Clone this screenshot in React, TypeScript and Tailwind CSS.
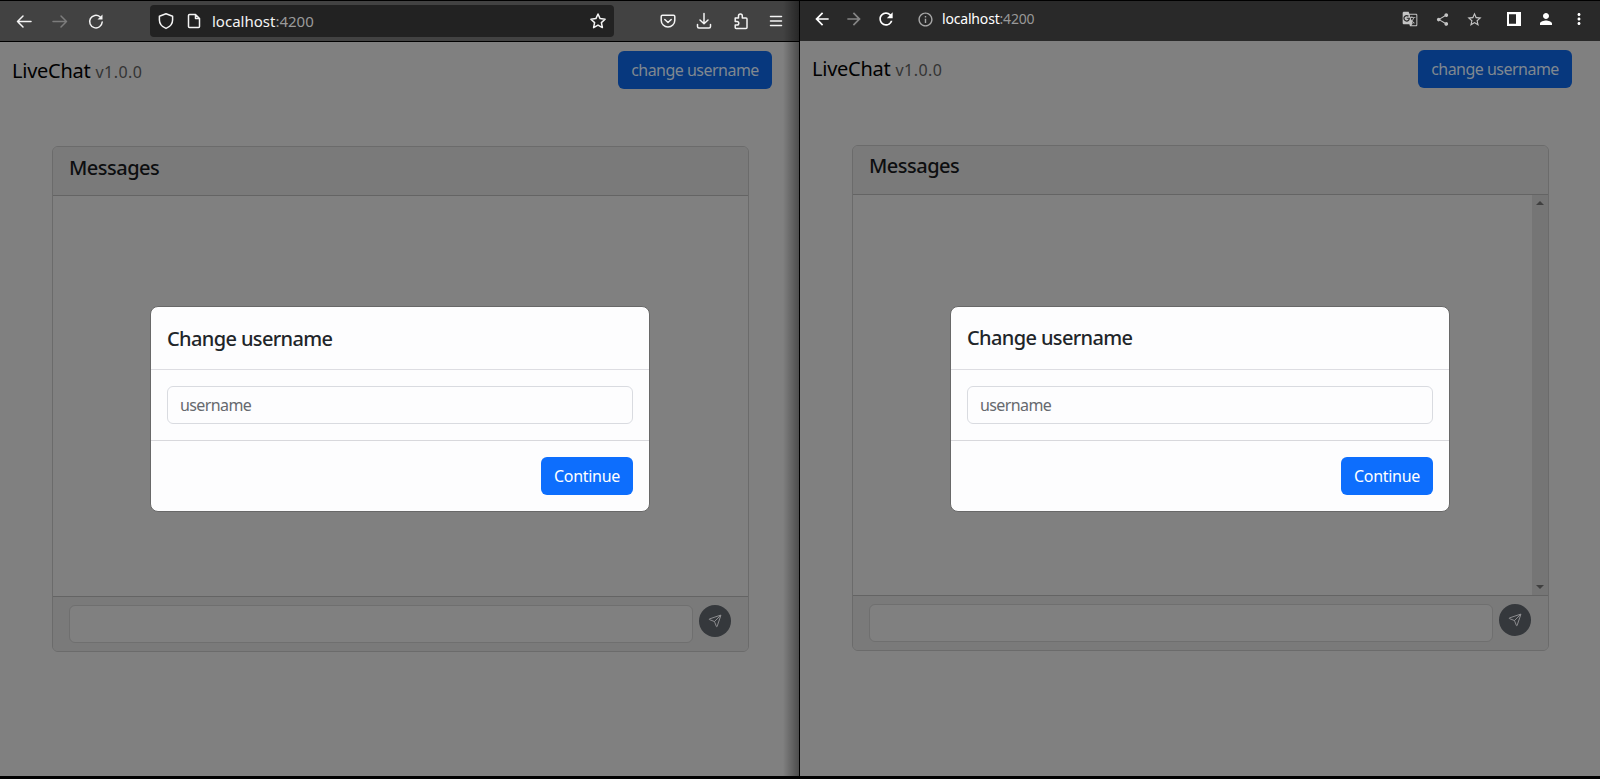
import React from "react";
import { Send } from "lucide-react";
import { MdArrowBack, MdArrowForward, MdRefresh, MdOutlineInfo, MdGTranslate, MdShare, MdStarBorder, MdPerson, MdMoreVert } from "react-icons/md";

const stroke = { fill: "none", stroke: "currentColor", strokeWidth: 1.5, strokeLinecap: "round", strokeLinejoin: "round" } as const;

function Icon({ children, className }: { children: React.ReactNode; className?: string }) {
  return (
    <svg viewBox="0 0 16 16" className={`size-4 shrink-0 overflow-visible ${className ?? ""}`} {...stroke}>
      {children}
    </svg>
  );
}

function FirefoxBar() {
  return (
    <div className="flex h-[42px] items-center border-y border-black bg-[#424242] pl-4 text-[#f4f4f4]">
      <Icon><path d="M15 8.5H1.5M7 3 1.5 8.500 7 14" /></Icon>
      <Icon className="ml-5 text-[#7c7c7c]"><path d="M1 8.500H14.500M9 3l5.500 5.500L9 14" /></Icon>
      <Icon className="ml-5"><path d="M14.200 9A6.300 6.300 0 1 1 12 3.800" /><path d="M14.500 1.500v5H9.500z" fill="currentColor" stroke="none" /></Icon>
      <div className="ml-[46px] flex h-8 w-[464px] items-center rounded bg-[#222222] pl-2">
        <Icon><path d="M8 .8 14.600 3.200V7c0 4-2.600 6.800-6.600 8.400C4 13.800 1.400 11 1.400 7V3.200z" /></Icon>
        <Icon className="ml-3"><path d="M3.500 1.500h6l4 4v8a1 1 0 0 1-1 1h-9a1 1 0 0 1-1-1v-11a1 1 0 0 1 1-1zM9.500 1.500v4h4" /></Icon>
        <span className="ml-2.5 text-[15px] leading-5">localhost<span className="text-[#9a9a9a]">:4200</span></span>
        <Icon className="ml-auto mr-2"><path d="M8 1l2.100 4.600 5 .6-3.700 3.400 1 5L8 12.100l-4.400 2.500 1-5L.9 6.200l5-.6z" /></Icon>
      </div>
      <Icon className="ml-[46px]"><path d="M2.500 2.200h11a1.300 1.300 0 0 1 1.300 1.300v3.700a6.800 6.800 0 0 1-13.600 0V3.500a1.300 1.300 0 0 1 1.300-1.300zM4.800 6.500 8 9.500l3.200-3" /></Icon>
      <Icon className="ml-5"><path d="M8 .5v10M4 7l4 3.800L12 7M1.500 11.500v2a1.500 1.500 0 0 0 1.500 1.500h10a1.500 1.500 0 0 0 1.500-1.500v-2" /></Icon>
      <Icon className="ml-[21px]"><path d="M2.200 5h3.300V3a1.900 1.900 0 0 1 3.800 0v2H13a1 1 0 0 1 1 1v8.500a1 1 0 0 1-1 1H3.200a1 1 0 0 1-1-1V12H4a1.800 1.800 0 0 0 0-3.600H2.200z" /></Icon>
      <Icon className="ml-[19px]"><path d="M2.500 3.500h11M2.500 8h11M2.500 12.500h11" /></Icon>
    </div>
  );
}

function ChromeBar() {
  return (
    <div className="flex h-[41px] items-center border-t border-black bg-[#292929] pb-[4px] pl-3 text-white">
      <MdArrowBack className="size-5" />
      <MdArrowForward className="ml-3 size-5 text-[#858585]" />
      <MdRefresh className="ml-3 size-5" />
      <MdOutlineInfo className="ml-[21px] size-[17px] text-[#a8a8a8]" />
      <span className="ml-2 text-[14px] leading-5 tracking-[-0.18px]">localhost<span className="text-[#989898]">:4200</span></span>
      <div className="ml-auto flex items-center pr-[12px] text-[#c4c4c4]">
        <MdGTranslate className="size-4" />
        <MdShare className="ml-[17px] size-[15px]" />
        <MdStarBorder className="ml-4 size-[17px]" />
        <svg viewBox="0 0 14 14" className="ml-6 size-[14px] text-white" fill="currentColor"><path fillRule="evenodd" d="M0 0h14v14H0zM2 2.200v9.600h7V2.200z" /></svg>
        <MdPerson className="ml-[16px] size-[18px] text-white" />
        <MdMoreVert className="ml-[15px] size-[18px] text-white" />
      </div>
    </div>
  );
}

function ChatPage({ scrollbar = false }: { scrollbar?: boolean }) {
  return (
    <div className="flex flex-col">
      <header className={`flex h-[58px] items-start justify-between pl-3 pt-[9px] ${scrollbar ? "pr-7" : "pr-[27px]"}`}>
        <div className={`whitespace-nowrap text-[20px] leading-[30px] tracking-[-0.25px] text-black ${scrollbar ? "pt-1" : "pt-[5px]"}`}>
          LiveChat <span className="text-[16px] tracking-[0.45px] text-[#343434]">v1.0.0</span>
        </div>
        <button className="h-[38px] w-[154px] whitespace-nowrap rounded-md bg-[#07387e] text-[16px] tracking-[-0.52px] text-[#808890]">change username</button>
      </header>
      <section className="ml-[52px] mt-[46px] flex h-[506px] w-[697px] flex-col rounded-md border border-[#6b6b6b]">
        <div className={`flex h-[49px] shrink-0 items-center rounded-t-[5px] border-b border-[#646464] bg-[#7a7a7a] px-4 ${scrollbar ? "pb-2" : "pb-1.5"}`}>
          <h2 className="text-[20px] font-medium leading-6 tracking-[-0.5px] text-[#0d0e10]">Messages</h2>
        </div>
        <div className="flex flex-1 justify-end">
          {scrollbar && (
            <div className="flex w-4 flex-col items-center justify-between bg-[#757575] py-1.5 text-[#404040]">
              <svg viewBox="0 0 8 4" className="h-1 w-2" fill="currentColor"><path d="M0 4 4 0l4 4z" /></svg>
              <svg viewBox="0 0 8 4" className="h-1 w-2" fill="currentColor"><path d="M0 0l4 4 4-4z" /></svg>
            </div>
          )}
        </div>
        <div className="flex h-[55px] shrink-0 items-center rounded-b-[5px] border-t border-[#646464] bg-[#7a7a7a] px-4">
          <div className="h-[38px] w-[624px] rounded-md border border-[#6f6f6f] bg-[#808080]" />
          <div className="mb-[7px] ml-1.5 flex size-8 items-center justify-center rounded-full bg-[#35383c] text-[#8d8d90]">
            <Send className="size-[14px]" strokeWidth={1.700} />
          </div>
        </div>
      </section>
    </div>
  );
}

function UsernameModal({ titlePadding }: { titlePadding: string }) {
  return (
    <div className="flex h-[206px] w-[500px] flex-col overflow-hidden rounded-lg border border-[#686868] bg-[#fdfdfe] text-[#212529]">
      <div className={`flex h-[63px] shrink-0 items-center border-b border-[#dddde2] px-4 ${titlePadding}`}>
        <h2 className="text-[20px] font-medium leading-[30px] tracking-[-0.63px]">Change username</h2>
      </div>
      <div className="h-[71px] shrink-0 border-b border-[#d8d8dc] p-4">
        <div className="flex h-[38px] items-center rounded-md border border-[#d9dbe0] px-3 text-[16px] tracking-[-0.6px] text-[#66696e]">username</div>
      </div>
      <div className="flex justify-end p-4">
        <button className="h-[38px] w-[92px] rounded-md bg-[#0d6efd] text-[16px] tracking-[-0.3px] text-white">Continue</button>
      </div>
    </div>
  );
}

export default function App() {
  return (
    <div className="flex h-[779px] w-[1600px] overflow-hidden border-b-[3px] border-black bg-[#808080] font-['Noto_Sans',sans-serif]">
      <div className="relative h-full w-[800px] border-r border-black">
        <FirefoxBar />
        <ChatPage />
        <div className="absolute inset-y-0 right-0 w-4 bg-linear-to-r from-transparent to-black/40" />
        <div className="absolute left-[150px] top-[306px]"><UsernameModal titlePadding="pt-0.5" /></div>
      </div>
      <div className="relative h-full w-[800px]">
        <ChromeBar />
        <ChatPage scrollbar />
        <div className="absolute left-[150px] top-[306px]"><UsernameModal titlePadding="pt-0" /></div>
      </div>
    </div>
  );
}
